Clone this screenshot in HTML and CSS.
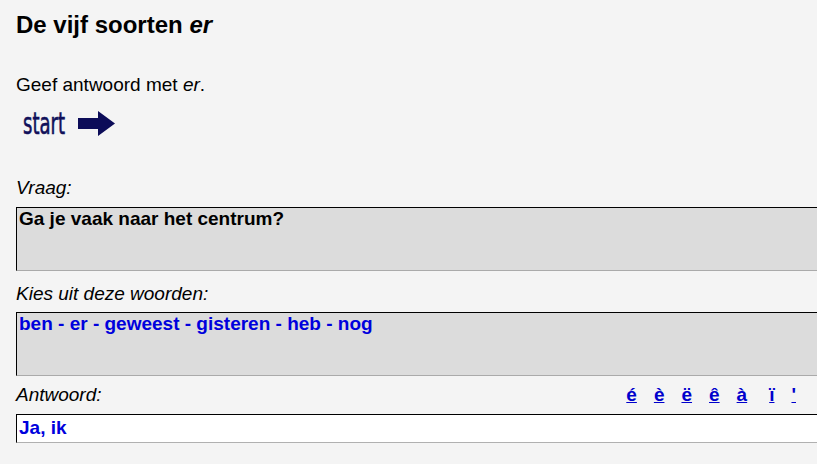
FILE: index.html
```html
<!DOCTYPE html>
<html lang="nl">
<head>
<meta charset="utf-8">
<title>De vijf soorten er</title>
<link rel="stylesheet" href="styles.css">
</head>
<body>
<h1 class="title">De vijf soorten <em>er</em></h1>
<p class="intro">Geef antwoord met <em>er</em>.</p>
<a class="start" href="#">
  <svg width="100" height="40" viewBox="0 -6 100 40" aria-label="start">
    <text x="2" y="24" class="start-text" textLength="42" lengthAdjust="spacingAndGlyphs">start</text>
    <path d="M57 8 H77 V1 L94 13.5 L77 26 V19 H57 Z" class="start-arrow"/>
  </svg>
</a>
<div class="label label-vraag">Vraag:</div>
<div class="box question">Ga je vaak naar het centrum?</div>
<div class="label label-kies">Kies uit deze woorden:</div>
<div class="box words">ben - er - geweest - gisteren - heb - nog</div>
<div class="answer-row">
  <span class="label">Antwoord:</span>
  <span class="accents">
    <a href="#">é</a><a href="#">è</a><a href="#">ë</a><a href="#">ê</a><a href="#">à</a><a href="#" class="narrow">ï</a><a href="#">'</a>
  </span>
</div>
<div class="answer">Ja, ik</div>
</body>
</html>
```
FILE: styles.css
```css
html {
  overflow: hidden;
  background: #f4f4f4;
}
body {
  margin: 0;
  padding: 0 0 0 16px;
  background: #f4f4f4;
  font-family: "Liberation Sans", Arial, sans-serif;
  font-size: 19px;
  color: #000;
}
.title {
  margin: 11px 0 0;
  font-size: 24px;
  line-height: 28px;
  font-weight: bold;
}
.title em {
  font-style: italic;
}
.intro {
  margin: 35px 0 0;
  line-height: 22px;
}
.start {
  display: block;
  margin: 8px 0 0 5px;
  width: 100px;
  height: 40px;
}
.start svg {
  display: block;
  overflow: visible;
}
.start-text {
  font-family: "DejaVu Sans Condensed", "DejaVu Sans", sans-serif;
  font-size: 30px;
  fill: #10105a;
  stroke: #10105a;
  stroke-width: 0.6;
}
.start-arrow {
  fill: #0c0c58;
}
.label {
  font-style: italic;
  line-height: 22px;
}
.label-vraag {
  margin-top: 33px;
}
.label-kies {
  margin-top: 12px;
}
.box {
  box-sizing: border-box;
  width: 840px;
  height: 64px;
  margin-top: 8px;
  padding: 1px 2px 0;
  background: #dcdcdc;
  border-top: 1px solid #000;
  border-left: 1px solid #000;
  border-bottom: 1px solid #aaaaaa;
  font-weight: bold;
  line-height: 19px;
}
.words {
  margin-top: 7px;
  color: #0000dd;
}
.answer-row {
  display: flex;
  justify-content: space-between;
  margin-top: 8px;
  padding-right: 21px;
  line-height: 22px;
}
.accents {
  display: flex;
  gap: 17px;
}
.accents a {
  color: #0000cc;
  font-weight: bold;
  font-style: normal;
  text-decoration: underline;
}
.accents .narrow {
  margin-left: 5px;
}
.answer {
  box-sizing: border-box;
  width: 840px;
  height: 29px;
  margin-top: 8px;
  padding: 2px 2px 0;
  background: #ffffff;
  border-top: 1px solid #000;
  border-left: 1px solid #000;
  border-bottom: 1px solid #b0b0b0;
  color: #0000dd;
  font-weight: bold;
  line-height: 22px;
}
```
